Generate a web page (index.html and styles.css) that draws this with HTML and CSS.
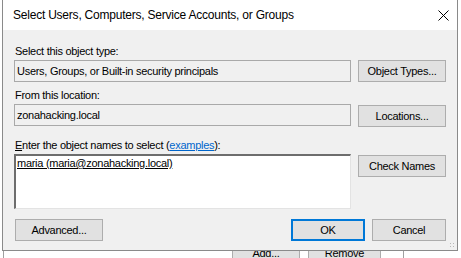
FILE: index.html
```html
<!DOCTYPE html>
<html lang="en">
<head>
  <meta charset="UTF-8">
  <title>Select Users, Computers, Service Accounts, or Groups</title>
  <link rel="stylesheet" href="styles.css">
</head>
<body>
  <!-- window behind the dialog -->
  <div class="behind">
    <span class="bbtn add">Add...</span>
    <span class="bbtn remove">Remove</span>
  </div>

  <div class="dialog">
    <div class="titlebar">
      <span class="title">Select Users, Computers, Service Accounts, or Groups</span>
      <svg class="close" width="11" height="11" viewBox="0 0 11 11">
        <path d="M0.5 0.5 L10.5 10.5 M10.5 0.5 L0.5 10.5" stroke="#000" stroke-width="1" fill="none"/>
      </svg>
    </div>

    <div class="content">
      <div class="label first">Select this object type:</div>
      <div class="row">
        <div class="field">Users, Groups, or Built-in security principals</div>
        <button class="btn">Object Types...</button>
      </div>

      <div class="label">From this location:</div>
      <div class="row">
        <div class="field">zonahacking.local</div>
        <button class="btn">Locations...</button>
      </div>

      <div class="label"><u>E</u>nter the object names to select (<a class="link">examples</a>):</div>
      <div class="row">
        <div class="names"><u>maria (maria@zonahacking.local)</u></div>
        <button class="btn">Check Names</button>
      </div>

      <div class="footer">
        <button class="btn adv">Advanced...</button>
        <div class="spacer"></div>
        <button class="btn small default">OK</button>
        <button class="btn small">Cancel</button>
      </div>
    </div>
    <div class="grip"></div>
  </div>
</body>
</html>
```

FILE: styles.css
```css
* { box-sizing: border-box; }
body {
  margin: 0;
  width: 461px;
  height: 258px;
  position: relative;
  overflow: hidden;
  background: #ffffff;
  font-family: 'Liberation Sans', Arial, sans-serif;
  font-size: 11px;
  letter-spacing: -0.28px;
  color: #000;
}

/* background window */
.behind {
  position: absolute;
  left: 3px;
  top: 240px;
  width: 401px;
  height: 18px;
  border-left: 1px solid #a0a0a0;
  border-right: 1px solid #a0a0a0;
}
.bbtn {
  position: absolute;
  top: 2px;
  height: 22px;
  line-height: 20px;
  text-align: center;
  background: #e1e1e1;
  border: 1px solid #adadad;
}
.add { left: 228px; width: 68px; }
.remove { left: 304px; width: 73px; }

.dialog {
  position: absolute;
  left: 2px;
  top: 0;
  width: 456px;
  height: 251px;
  border: 1px solid #8a8a8a;
  border-top: none;
  background: #f0f0f0;
}
.titlebar {
  height: 30px;
  background: #ffffff;
  display: flex;
  align-items: center;
  padding-left: 10px;
  padding-right: 8px;
}
.title {
  flex: 1;
  font-size: 12px;
  letter-spacing: -0.22px;
  color: #000;
  padding-bottom: 1px;
}
.close {
  display: block;
}

.content {
  padding: 14px 11px 0 11px;
}
.label {
  line-height: 14px;
  height: 14px;
  margin: 6px 0 2px 1px;
  color: #000;
}
.label.first { margin-top: 0; }
.link {
  color: #0066cc;
  text-decoration: underline;
}
.row {
  display: flex;
  gap: 7px;
  align-items: flex-start;
}
.field {
  flex: 1;
  height: 22px;
  border: 1px solid #a9a9a9;
  background: #f0f0f0;
  line-height: 20px;
  padding-left: 2px;
}
.names {
  flex: 1;
  height: 55px;
  background: #fff;
  border-top: 2px solid #6d6d6d;
  border-left: 2px solid #6d6d6d;
  border-right: 1px solid #e3e3e3;
  border-bottom: 1px solid #e3e3e3;
  padding: 0 0 0 1px;
  line-height: 14px;
}
.row + .label { margin-top: 6px; }
.row:nth-of-type(4) + .label { margin-top: 11px; }
.btn {
  width: 88px;
  height: 22px;
  margin: 0;
  padding: 0;
  background: #e1e1e1;
  border: 1px solid #adadad;
  font-family: 'Liberation Sans', Arial, sans-serif;
  font-size: 11px;
  letter-spacing: -0.28px;
  color: #000;
}
.row:nth-of-type(4) .btn,
.row:nth-of-type(6) .btn { margin-top: 1px; }

.footer {
  display: flex;
  gap: 7px;
  margin-top: 10px;
}
.adv { margin-left: 1px; }
.spacer { flex: 1; }
.btn.small { width: 74px; }
.btn.default { border: 2px solid #0078d7; }

.grip {
  position: absolute;
  right: 1px;
  bottom: 1px;
  width: 7px;
  height: 7px;
  background-image: radial-gradient(circle, #b8b8b8 0.8px, transparent 1px);
  background-size: 3px 3px;
}
```
